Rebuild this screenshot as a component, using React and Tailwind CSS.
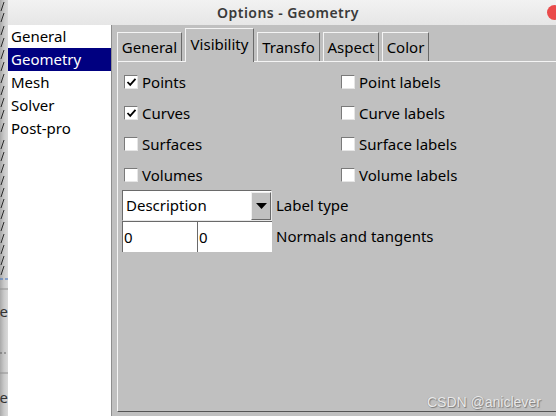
import React from "react";

const slashYs = [2, 13, 26, 38, 50, 62, 74, 86, 98, 110, 123, 140, 152, 164, 176, 188, 199, 210, 222, 234, 245, 256, 266];

function LeftStrip() {
  return (
    <div className="relative w-[8px] h-full shrink-0 overflow-hidden bg-gradient-to-r from-[#a9a9a9] via-[#c9c9c9] to-[#dadada]">
      <svg width="8" height="416" className="absolute left-0 top-0">
        {slashYs.map((y) => (
          <line key={y} x1="1" y1={y + 9} x2="4" y2={y} stroke="#2a2a2a" strokeWidth="1" />
        ))}
        <line x1="0" y1="279" x2="8" y2="279" stroke="#3a6fc0" strokeWidth="1" strokeDasharray="3 2" />
        <line x1="0" y1="289" x2="8" y2="289" stroke="#909090" strokeWidth="1" />
        <line x1="0" y1="373" x2="8" y2="373" stroke="#909090" strokeWidth="1" />
        <circle cx="1" cy="353" r="0.8" fill="#555" />
        <circle cx="5" cy="353" r="0.8" fill="#555" />
      </svg>
      <div className="absolute right-0 top-[301px] text-[15px] leading-[20px] text-[#333] whitespace-nowrap">le</div>
      <div className="absolute right-0 top-[387px] text-[15px] leading-[20px] text-[#333] whitespace-nowrap">e</div>
    </div>
  );
}

function Checkbox({ checked, label }) {
  return (
    <div className="flex items-center h-[31px]">
      <div className="w-[14px] h-[14px] bg-white border-l border-t border-[#7a7a7a] border-r-[#e6e6e6] border-b-[#e6e6e6] border-r border-b flex items-center justify-center">
        {checked && (
          <svg width="11" height="10" viewBox="0 0 11 10">
            <path d="M1.5 5 L4.2 7.8 L9.5 1.8" stroke="#000" strokeWidth="1.8" fill="none" />
          </svg>
        )}
      </div>
      <span className="ml-[4px] text-[15px] leading-[20px] text-black">{label}</span>
    </div>
  );
}

function Tab({ label, w, selected }) {
  return (
    <div
      className={
        "flex items-center justify-center border-l border-t border-r border-l-[#f4f4f4] border-t-[#f4f4f4] border-r-[#6a6a6a] text-[15px] text-black bg-[#c0c0c0] " +
        (selected ? "h-[34px] -mb-[1px] relative z-10 pb-[2px]" : "h-[29px]")
      }
      style={{ width: w }}
    >
      {label}
    </div>
  );
}

export default function App() {
  const items = ["General", "Geometry", "Mesh", "Solver", "Post-pro"];
  return (
    <div className="w-[556px] h-[416px] flex overflow-hidden bg-[#c0c0c0] font-['Noto_Sans',sans-serif] relative">
      <LeftStrip />
      <div className="flex-1 flex flex-col min-w-0">
        <div className="h-[25px] shrink-0 bg-gradient-to-b from-[#f2f2f2] to-[#e6e6e6] flex items-center justify-center pl-[12px]">
          <span className="text-[14px] font-semibold tracking-[0.45px] text-[#3a3a3a]">Options - Geometry</span>
        </div>
        <div className="flex-1 flex min-h-0">
          <div className="w-[104px] shrink-0 bg-white border-r border-[#8e8e8e] flex flex-col">
            {items.map((it) => (
              <div
                key={it}
                className={
                  "h-[23px] flex items-center pl-[3px] text-[15px] " +
                  (it === "Geometry" ? "bg-[#000080] text-white" : "text-black")
                }
              >
                {it}
              </div>
            ))}
          </div>
          <div className="flex-1 flex flex-col pl-[5px] pt-[4px] min-w-0">
            <div className="flex items-end gap-[3px] h-[32px]">
              <Tab label="General" w={65} />
              <Tab label="Visibility" w={69} selected />
              <Tab label="Transfo" w={63} />
              <Tab label="Aspect" w={56} />
              <Tab label="Color" w={47} />
            </div>
            <div className="h-[351px] border-l border-t border-b border-l-[#f4f4f4] border-t-[#f4f4f4] border-b-[#555555] px-[4px] pt-[4px] -mr-[4px]">
              <div className="grid grid-cols-[217px_1fr] pl-[2px]">
                <Checkbox checked label="Points" />
                <Checkbox label="Point labels" />
                <Checkbox checked label="Curves" />
                <Checkbox label="Curve labels" />
                <Checkbox label="Surfaces" />
                <Checkbox label="Surface labels" />
                <Checkbox label="Volumes" />
                <Checkbox label="Volume labels" />
              </div>
              <div className="flex items-center">
                <div className="w-[150px] h-[31px] bg-white border-l border-t border-[#6a6a6a] border-r border-b border-r-[#e8e8e8] border-b-[#e8e8e8] flex items-center">
                  <span className="flex-1 pl-[3px] text-[15px] text-black">Description</span>
                  <div className="w-[20px] h-[28px] bg-[#c0c0c0] border-l border-t border-[#f0f0f0] border-r border-b border-r-[#6a6a6a] border-b-[#6a6a6a] flex items-center justify-center">
                    <svg width="11" height="6" viewBox="0 0 11 6">
                      <path d="M0 0 H11 L5.5 6 Z" fill="#000" />
                    </svg>
                  </div>
                </div>
                <span className="ml-[4px] text-[15px] text-black">Label type</span>
              </div>
              <div className="flex items-center">
                <div className="w-[75px] h-[31px] bg-white border-l border-t border-[#6a6a6a] flex items-center pl-[1px] text-[15px] text-black">0</div>
                <div className="w-[75px] h-[31px] bg-white border-l border-t border-[#6a6a6a] flex items-center pl-[1px] text-[15px] text-black">0</div>
                <span className="ml-[4px] text-[15px] text-black">Normals and tangents</span>
              </div>
            </div>
          </div>
        </div>
      </div>
      <div className="absolute left-[547px] top-[5px] w-[15px] h-[15px] rounded-full bg-[#ea4b4b]" />
      <div className="absolute left-[427px] top-[392px] text-[14px] font-['Liberation_Sans',sans-serif] text-[#e9e9e9] [text-shadow:1px_1px_1px_#7a7a7a,-0.5px_-0.5px_0.5px_#9a9a9a]">
        CSDN @aniclever
      </div>
    </div>
  );
}
